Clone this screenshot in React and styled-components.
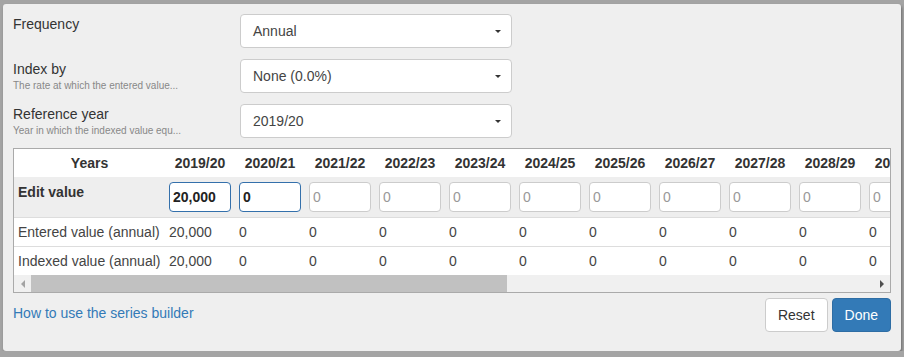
import React from "react";
import styled, { createGlobalStyle } from "styled-components";

const settings = [
  { label: "Frequency", value: "Annual" },
  {
    label: "Index by",
    hint: "The rate at which the entered value...",
    value: "None (0.0%)",
  },
  {
    label: "Reference year",
    hint: "Year in which the indexed value equ...",
    value: "2019/20",
  },
];

const years = Array.from({ length: 20 }, (_, i) => {
  const start = 2019 + i;
  return `${start}/${String((start + 1) % 100).padStart(2, "0")}`;
});

const entered = years.map((_, i) => (i === 0 ? "20,000" : "0"));

const FIRST_COL = 151;
const YEAR_COL = 70;
const TABLE_WIDTH = FIRST_COL + years.length * YEAR_COL;
const VIEW_WIDTH = 876;

const App = () => {
  const thumbPct = (VIEW_WIDTH / TABLE_WIDTH) * 100;

  return (
    <>
      <GlobalStyle />
      <Modal>
        {settings.map((s) => (
          <FieldRow key={s.label}>
            <LabelCol>
              <Label>{s.label}</Label>
              {s.hint && <Hint>{s.hint}</Hint>}
            </LabelCol>
            <SelectBox>
              <span>{s.value}</span>
              <Caret />
            </SelectBox>
          </FieldRow>
        ))}

        <TableFrame>
          <TableView>
            <Table>
              <colgroup>
                <col style={{ width: FIRST_COL }} />
                {years.map((y) => (
                  <col key={y} style={{ width: YEAR_COL }} />
                ))}
              </colgroup>
              <thead>
                <tr>
                  <th>Years</th>
                  {years.map((y) => (
                    <th key={y}>{y}</th>
                  ))}
                </tr>
              </thead>
              <tbody>
                <EditRow>
                  <td>Edit value</td>
                  {years.map((y, i) => (
                    <td key={y}>
                      {i < 2 ? (
                        <CellInput $active defaultValue={entered[i]} />
                      ) : (
                        <CellInput placeholder="0" />
                      )}
                    </td>
                  ))}
                </EditRow>
                <ValueRow>
                  <td>Entered value (annual)</td>
                  {entered.map((v, i) => (
                    <td key={i}>{v}</td>
                  ))}
                </ValueRow>
                <ValueRow>
                  <td>Indexed value (annual)</td>
                  {entered.map((v, i) => (
                    <td key={i}>{v}</td>
                  ))}
                </ValueRow>
              </tbody>
            </Table>
          </TableView>
          <ScrollBar>
            <ScrollArrow $dir="left" />
            <ScrollTrack>
              <ScrollThumb style={{ width: `${thumbPct}%` }} />
            </ScrollTrack>
            <ScrollArrow $dir="right" />
          </ScrollBar>
        </TableFrame>

        <Footer>
          <HelpLink href="#">How to use the series builder</HelpLink>
          <Buttons>
            <Button>Reset</Button>
            <Button $primary>Done</Button>
          </Buttons>
        </Footer>
      </Modal>
    </>
  );
};

const GlobalStyle = createGlobalStyle`
  body {
    margin: 0;
    background: #a4a4a4;
    font-family: "Liberation Sans", Arial, sans-serif;
    font-size: 14px;
    line-height: 20px;
    color: #333;
  }
`;

const Modal = styled.div`
  box-sizing: border-box;
  width: 898px;
  margin: 4px 0 0 3px;
  padding: 10px 10px 19px;
  background: #efefef;
  border-radius: 3px;
  box-shadow: 1px 2px 3px rgba(0, 0, 0, 0.35);
`;

const FieldRow = styled.div`
  display: flex;
  align-items: flex-start;
  margin-bottom: 11px;

  &:nth-of-type(3) {
    margin-bottom: 10px;
  }
`;

const LabelCol = styled.div`
  width: 227px;
  display: flex;
  flex-direction: column;
`;

const Label = styled.div`
  font-size: 14px;
  line-height: 20px;
  color: #333;
`;

const Hint = styled.div`
  font-size: 10px;
  line-height: 13px;
  color: #888;
`;

const SelectBox = styled.div`
  box-sizing: border-box;
  width: 272px;
  height: 34px;
  padding: 0 10px 0 12px;
  display: flex;
  align-items: center;
  justify-content: space-between;
  background: #fff;
  border: 1px solid #ccc;
  border-radius: 4px;
  color: #444;
`;

const Caret = styled.span`
  width: 0;
  height: 0;
  border-left: 3px solid transparent;
  border-right: 3px solid transparent;
  border-top: 3.5px solid #333;
`;

const TableFrame = styled.div`
  border: 1px solid #aaa;
  background: #fff;
`;

const TableView = styled.div`
  overflow: hidden;
`;

const Table = styled.table`
  width: ${TABLE_WIDTH}px;
  table-layout: fixed;
  border-collapse: collapse;

  th {
    padding: 4px;
    font-weight: bold;
    color: #333;
    text-align: center;
    white-space: nowrap;
    overflow: hidden;
  }

  td {
    padding: 4px;
    text-align: left;
    white-space: nowrap;
  }
`;

const EditRow = styled.tr`
  background: #eee;

  td {
    padding: 5px 4px;
    vertical-align: top;
  }

  td:first-child {
    font-weight: bold;
    color: #333;
  }
`;

const ValueRow = styled.tr`
  background: #fff;

  td {
    border-top: 1px solid #ddd;
    color: #444;
  }
`;

const CellInput = styled.input`
  box-sizing: border-box;
  display: block;
  width: 62px;
  height: 30px;
  padding: 0 3px;
  font-family: inherit;
  font-size: 14px;
  font-weight: ${(p) => (p.$active ? "bold" : "normal")};
  color: #222;
  background: #fff;
  border: 1px solid ${(p) => (p.$active ? "#3470ab" : "#ccc")};
  border-radius: 4px;
  outline: none;

  &::placeholder {
    color: #999;
  }
`;

const ScrollBar = styled.div`
  display: flex;
  height: 17px;
  background: #f0f0f0;
`;

const ScrollArrow = styled.div`
  width: 17px;
  display: flex;
  align-items: center;
  justify-content: center;

  &::before {
    content: "";
    width: 0;
    height: 0;
    border-top: 4px solid transparent;
    border-bottom: 4px solid transparent;
    ${(p) =>
      p.$dir === "left"
        ? "border-right: 4px solid #a3a3a3;"
        : "border-left: 4px solid #505050;"}
  }
`;

const ScrollTrack = styled.div`
  flex: 1;
  display: flex;
`;

const ScrollThumb = styled.div`
  height: 100%;
  background: #c1c1c1;
`;

const Footer = styled.div`
  display: flex;
  justify-content: space-between;
  align-items: flex-start;
  margin-top: 5px;
`;

const HelpLink = styled.a`
  padding-top: 5px;
  color: #337ab7;
  text-decoration: none;
`;

const Buttons = styled.div`
  display: flex;
  gap: 4px;
`;

const Button = styled.button`
  height: 34px;
  padding: 6px 12px;
  font-family: inherit;
  font-size: 14px;
  line-height: 20px;
  border-radius: 4px;
  border: 1px solid ${(p) => (p.$primary ? "#2e6da4" : "#ccc")};
  background: ${(p) => (p.$primary ? "#337ab7" : "#fff")};
  color: ${(p) => (p.$primary ? "#fff" : "#333")};
  cursor: pointer;
`;

export default App;
